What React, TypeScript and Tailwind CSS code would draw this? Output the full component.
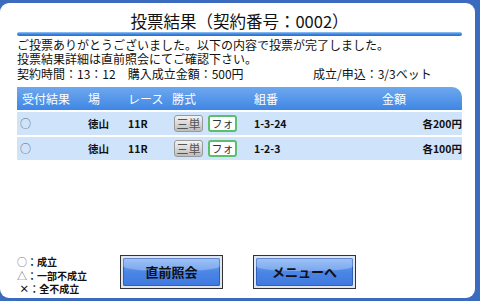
const font = { fontFamily: '"Noto Sans CJK JP", "Noto Sans", sans-serif' };

type Row = { mark: string; place: string; race: string; combo: string; amount: string };

const rows: Row[] = [
  { mark: "○", place: "徳山", race: "11R", combo: "1-3-24", amount: "各200円" },
  { mark: "○", place: "徳山", race: "11R", combo: "1-2-3", amount: "各100円" },
];

function GlossButton({ label }: { label: string }) {
  return (
    <button className="h-[34px] w-[103px] border border-[#333] bg-[#dfe6f2] p-[2px]">
      <div className="relative flex h-full w-full items-center justify-center overflow-hidden rounded-[2px] bg-gradient-to-b from-[#7fb0f5] via-[#4b86e6] to-[#3f78de] shadow-[inset_0_0_0_1px_#2f5fb8]">
        <div className="absolute left-0 right-0 top-0 h-[45%] rounded-b-[40%] bg-white/25" />
        <span className="relative text-[13px] font-bold text-[#111]">{label}</span>
      </div>
    </button>
  );
}

export default function App() {
  return (
    <div className="h-[301px] w-[480px] overflow-hidden bg-[#3b6bbf]" style={font}>
      <div className="mr-[5px] mt-[3px] h-[295px] rounded-[9px] bg-white pl-[17px] pr-[13px] pt-[9px]">
        {/* title */}
        <div className="text-center text-[16.5px] leading-[18px] text-[#111]">
          投票結果（契約番号：0002）
        </div>
        <div className="mt-[2px] h-[4px] rounded-full bg-gradient-to-b from-[#9cc6f5] via-[#3b86e0] to-[#2a6fcc]" />

        {/* messages */}
        <div className="mt-[2px] text-[12px] leading-[14px] text-[#111]">
          <div>ご投票ありがとうございました。以下の内容で投票が完了しました。</div>
          <div>投票結果詳細は直前照会にてご確認下さい。</div>
          <div className="mt-[1px] flex">
            <span className="w-[296px]">契約時間：13：12　購入成立金額：500円</span>
            <span>成立/申込：3/3ベット</span>
          </div>
        </div>

        {/* table */}
        <div className="mt-[6px]">
          <div className="flex h-[23px] items-center rounded-tr-[10px] bg-gradient-to-b from-[#6ea8ee] to-[#3f86e4] text-[12px] text-white">
            <span className="w-[71px] pl-[5px]">受付結果</span>
            <span className="w-[40px]">場</span>
            <span className="w-[44px]">レース</span>
            <span className="w-[82px]">勝式</span>
            <span className="flex-1">組番</span>
            <span className="w-[80px]">金額</span>
          </div>
          {rows.map((r, i) => (
            <div
              key={i}
              className="mt-[2px] flex h-[23px] items-center bg-[#cfe3fa] text-[10.5px] font-bold text-[#111]"
            >
              <span className="w-[71px] pl-[3px] text-[11px] font-normal text-[#666]">{r.mark}</span>
              <span className="w-[40px]">{r.place}</span>
              <span className="w-[46px]">{r.race}</span>
              <span className="flex w-[80px] gap-[5px]">
                <span className="flex h-[17px] w-[29px] items-center justify-center rounded-[3px] border border-[#999] bg-gradient-to-b from-[#f4f4f4] to-[#bdbdbd] text-[12px] font-normal text-[#555]">
                  三単
                </span>
                <span className="flex h-[17px] w-[29px] items-center justify-center rounded-[3px] border-2 border-[#5bbf6e] bg-white text-[11px] font-normal text-[#333]">
                  フォ
                </span>
              </span>
              <span className="flex-1">{r.combo}</span>
              <span>{r.amount}</span>
            </div>
          ))}
        </div>

        {/* footer */}
        <div className="mt-[95px] flex items-start">
          <div className="w-[103px] text-[10px] font-bold leading-[13.5px] text-[#111]">
            <div><span className="font-normal text-[#666]">○</span>：成立</div>
            <div><span className="font-normal text-[#666]">△</span>：一部不成立</div>
            <div>&nbsp;×：全不成立</div>
          </div>
          <GlossButton label="直前照会" />
          <div className="w-[30px]" />
          <GlossButton label="メニューへ" />
        </div>
      </div>
    </div>
  );
}
